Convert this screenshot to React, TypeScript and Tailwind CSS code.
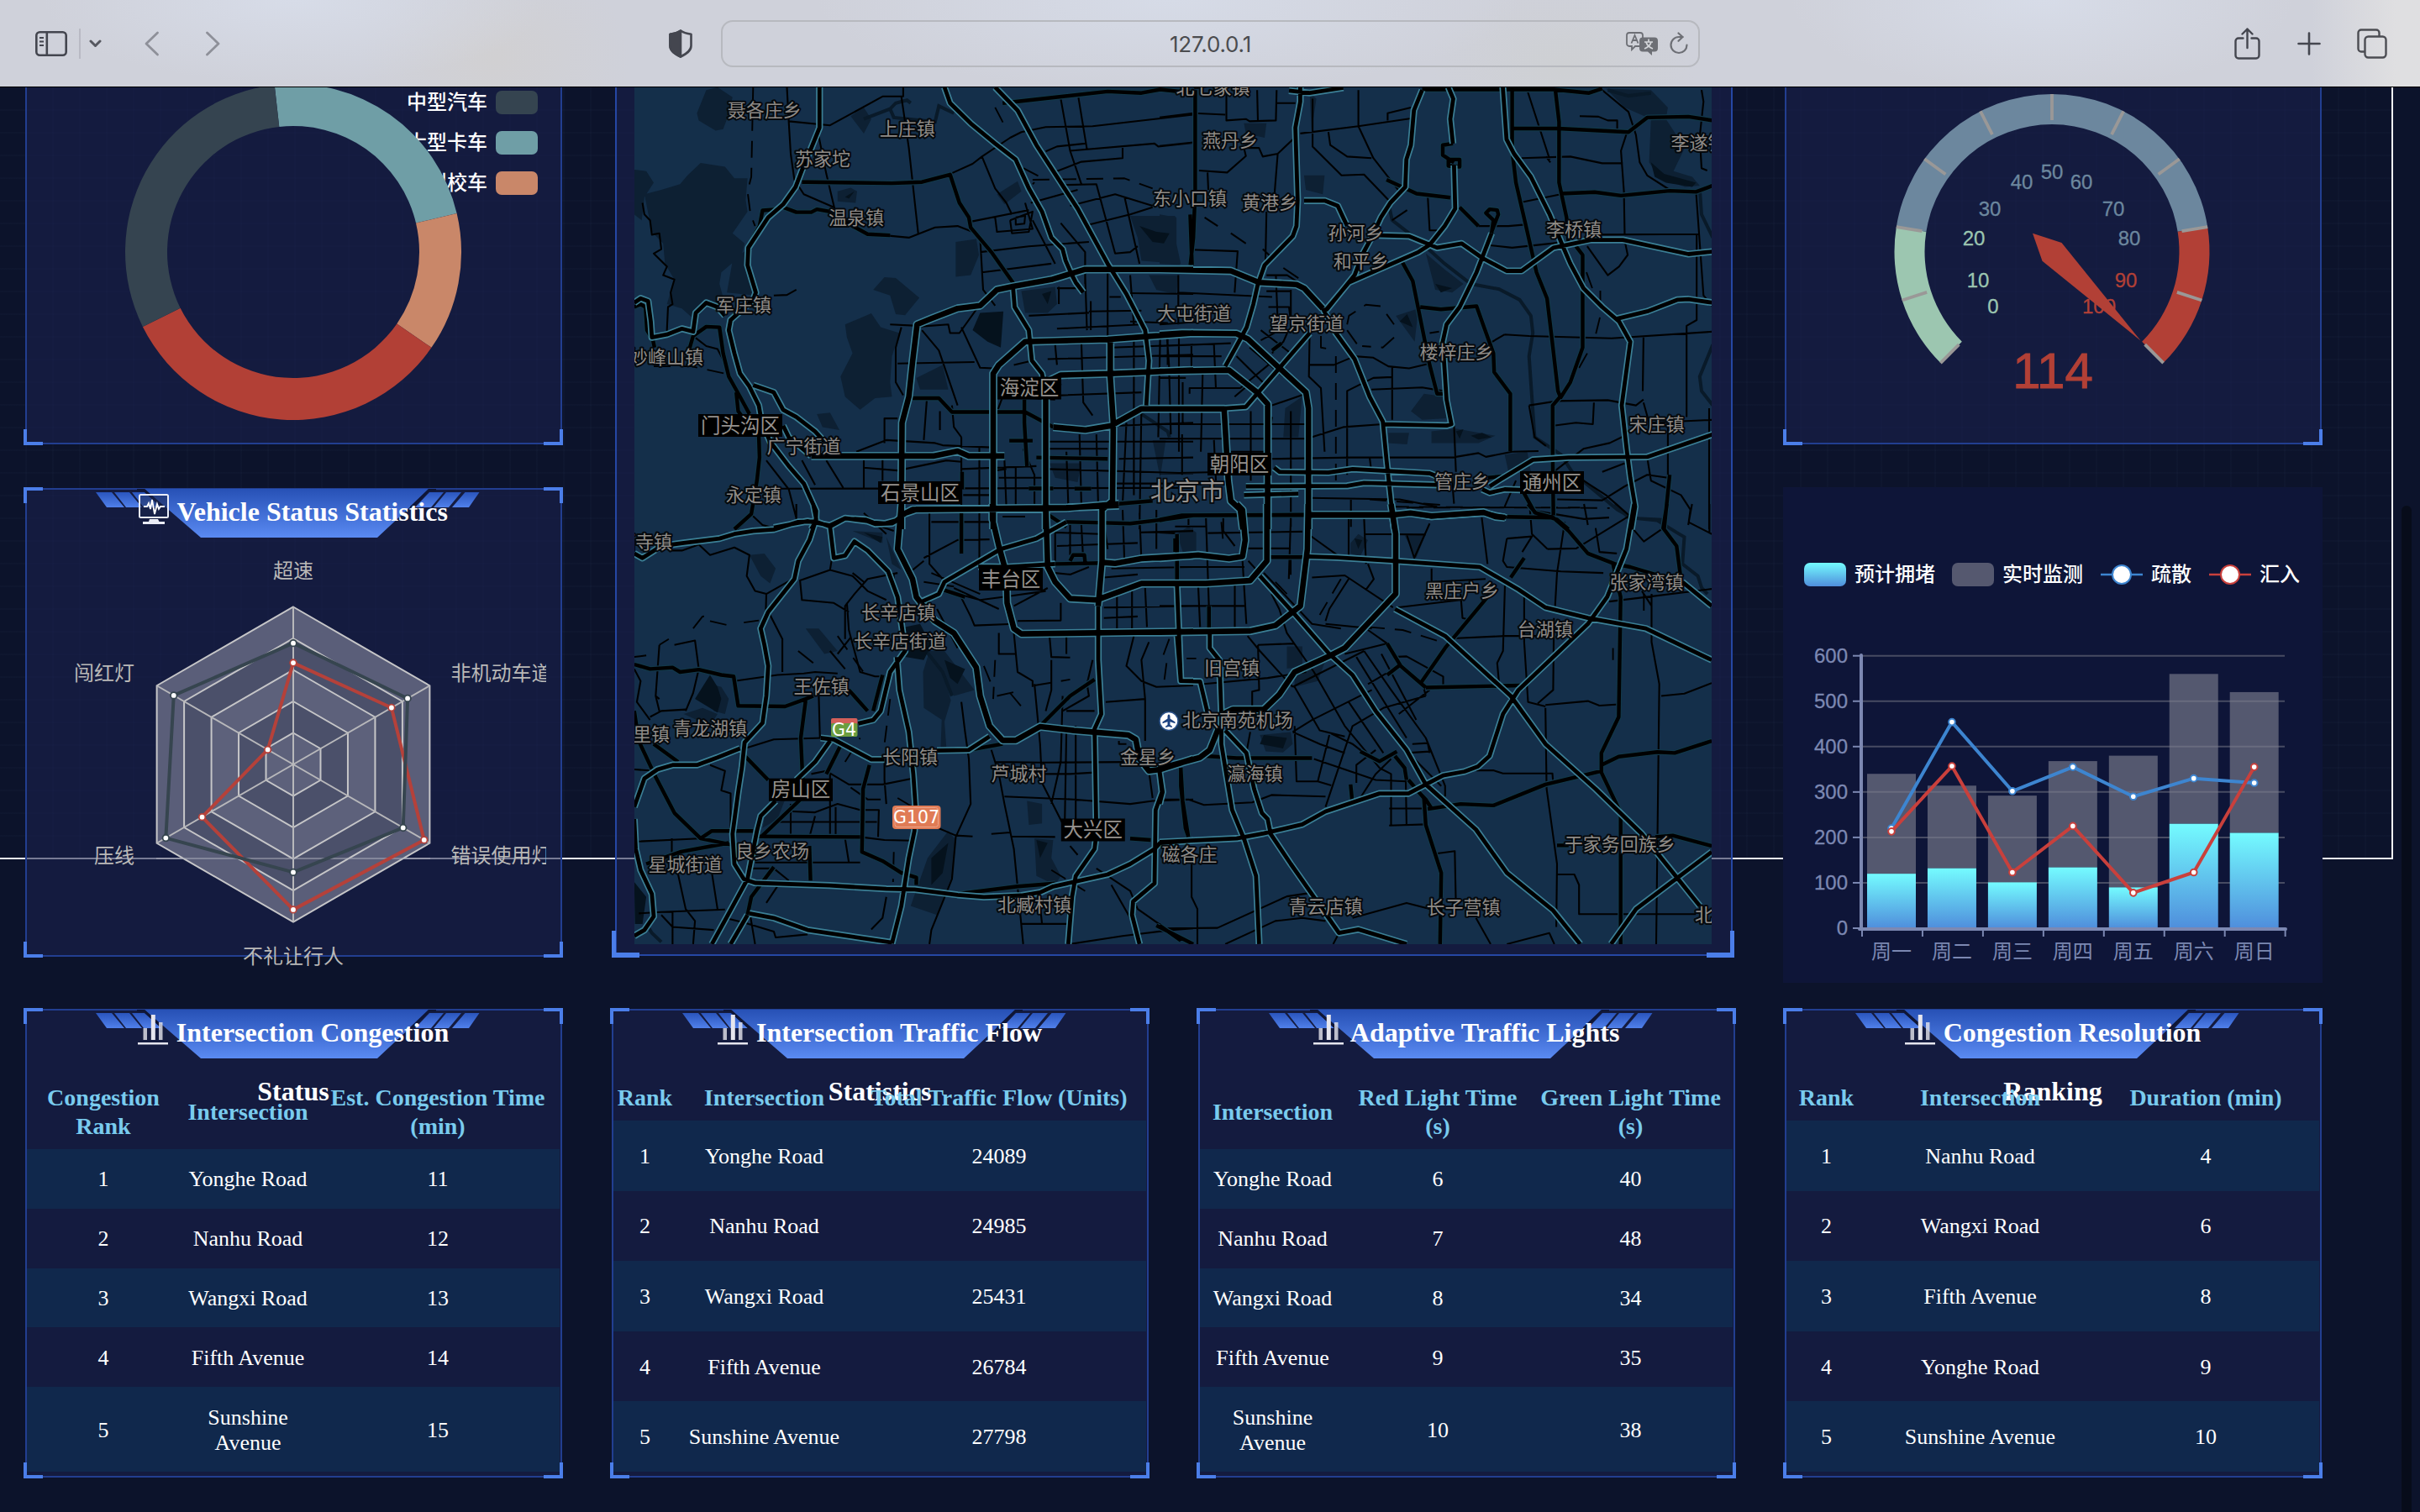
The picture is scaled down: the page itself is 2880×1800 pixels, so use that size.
import React from "react";

const CJK = "font-['Noto_Sans_CJK_SC',sans-serif]";

/* ------------------------------------------------------------------ */
/* Browser toolbar                                                     */
/* ------------------------------------------------------------------ */

function Toolbar() {
  return (
    <header className="relative z-10 flex h-[104px] shrink-0 items-center border-b border-black bg-[#cfd1da] bg-[radial-gradient(ellipse_300px_100px_at_350px_0,#d7dce8,transparent),radial-gradient(ellipse_420px_110px_at_1390px_0,#d6dbe7,transparent),radial-gradient(ellipse_300px_110px_at_2430px_0,#d7dce8,transparent),radial-gradient(ellipse_160px_120px_at_590px_70px,#d1d0d2,transparent),radial-gradient(ellipse_160px_100px_at_1860px_80px,#ced0d3,transparent),linear-gradient(90deg,transparent_95.5%,#dfdfe1_99%)]">
      <div className="flex w-[858px] items-center">
        <svg className="ml-[42px] h-[30px] w-[38px]" viewBox="0 0 38 30" fill="none" stroke="#44464f" strokeWidth="2.6">
          <rect x="1.3" y="1.3" width="35.4" height="27.4" rx="4" />
          <path d="M13.8 1.3v27.4" />
          <path d="M5 8h5M5 12.5h5M5 17h5" strokeWidth="2" />
        </svg>
        <div className="ml-[14px] h-9 w-[2px] bg-[#b9bac4]" />
        <svg className="ml-[10px] h-[10px] w-[15px]" viewBox="0 0 15 10" fill="none" stroke="#55575f" strokeWidth="3" strokeLinecap="round" strokeLinejoin="round">
          <path d="M2 2l5.5 5.5L13 2" />
        </svg>
        <svg className="ml-[51px] h-[30px] w-[18px]" viewBox="0 0 18 30" fill="none" stroke="#8e9099" strokeWidth="2.8" strokeLinecap="round" strokeLinejoin="round">
          <path d="M15.5 2L2 15l13.500 13" />
        </svg>
        <svg className="ml-[54px] h-[30px] w-[18px]" viewBox="0 0 18 30" fill="none" stroke="#8e9099" strokeWidth="2.8" strokeLinecap="round" strokeLinejoin="round">
          <path d="M2.500 2L16 15 2.500 28" />
        </svg>
        <svg className="ml-[534px] h-[34px] w-[28px]" viewBox="0 0 28 34" fill="none" stroke="#44464f" strokeWidth="2.600" strokeLinejoin="round">
          <path d="M14 1.500c3.500 2.500 7.500 3.500 12.500 4.200v13.800c0 6-5.500 9.500-12.500 13-7-3.500-12.500-7-12.500-13V5.700C6.500 5 10.500 4 14 1.500z" />
          <path d="M14 1.500v31c-7-3.500-12.500-7-12.500-13V5.700C6.500 5 10.500 4 14 1.500z" fill="#44464f" />
        </svg>
      </div>
      <div className="relative flex h-14 w-[1165px] items-center justify-center rounded-[14px] border-2 border-[#b7b9bf] font-['Inter',sans-serif] text-[26px] tracking-[-0.2px] text-[#4b4c4f]">
        <span className="relative top-px">127.0.0.1</span>
        <div className="absolute right-[12px] flex items-center gap-[14px]">
          <svg className="h-[28px] w-[38px]" viewBox="0 0 38 28">
            <path d="M4 1h13a3 3 0 013 3v10a3 3 0 01-3 3h-6l-4 4v-4H4a3 3 0 01-3-3V4a3 3 0 013-3z" fill="none" stroke="#6d6f75" strokeWidth="1.800" />
            <path d="M6.500 13.500L10.500 4l4 9.500M8 10h5" fill="none" stroke="#6d6f75" strokeWidth="1.800" />
            <path d="M20 6.500h14a4 4 0 014 4v9a4 4 0 01-4 4h-3v4.500l-5-4.500h-6a4 4 0 01-4-4v-9a4 4 0 014-4z" fill="#6d6f75" />
            <path d="M27 8.500v3M22 12h10M30 12c-1 4-4 6.500-8 8M24 12c1 4 4 6.500 8 8" fill="none" stroke="#d4d6da" strokeWidth="1.700" />
          </svg>
          <svg className="h-[28px] w-[22px]" viewBox="0 0 22 28" fill="none" stroke="#6d6f75" strokeWidth="2.200" strokeLinecap="round" strokeLinejoin="round">
            <path d="M20.500 15.500A9.500 9.500 0 1111 6h4.500" />
            <path d="M10.500 1.500L15.500 6l-5 4.800" />
          </svg>
        </div>
      </div>
      <svg className="ml-[636px] h-[38px] w-[31px]" viewBox="0 0 31 38" fill="none" stroke="#44464f" strokeWidth="2.400" strokeLinecap="round" strokeLinejoin="round">
        <path d="M10.500 12.500H5a3.500 3.500 0 00-3.500 3.500v17A3.500 3.500 0 005 36.500h21a3.500 3.500 0 003.500-3.500V16a3.500 3.500 0 00-3.500-3.500h-5.500" />
        <path d="M15.500 24V1.500M9.500 7.500l6-6 6 6" />
      </svg>
      <svg className="ml-[44px] h-[28px] w-[28px]" viewBox="0 0 28 28" fill="none" stroke="#44464f" strokeWidth="2.600" strokeLinecap="round">
        <path d="M14 1.500v25M1.500 14h25" />
      </svg>
      <svg className="ml-[43px] h-[36px] w-[36px]" viewBox="0 0 36 36" fill="none" stroke="#4c4d53" strokeWidth="2.400" strokeLinejoin="round">
        <path d="M9.500 27.500H5A3.500 3.500 0 011.500 24V5A3.500 3.500 0 015 1.500h18A3.500 3.500 0 0126.500 5v4" />
        <rect x="9.500" y="9.500" width="25" height="25" rx="4" />
      </svg>
    </header>
  );
}

/* ------------------------------------------------------------------ */
/* Panel frame and title banner                                        */
/* ------------------------------------------------------------------ */

function Panel({ className, children }: { className: string; children?: React.ReactNode }) {
  return (
    <section className={`relative w-[642px] shrink-0 ${className}`}>
      <div className="absolute inset-y-[1px] left-[2px] right-[1px] border-2 border-[#223e90] bg-[rgba(26,33,80,0.57)]" />
      <i className="absolute left-0 top-0 h-[19px] w-[23px] border-l-4 border-t-4 border-[#4b7ee9]" />
      <i className="absolute right-0 top-0 h-[19px] w-[23px] border-r-4 border-t-4 border-[#4b7ee9]" />
      <i className="absolute bottom-0 left-0 h-[19px] w-[23px] border-b-4 border-l-4 border-[#4b7ee9]" />
      <i className="absolute bottom-0 right-0 h-[19px] w-[23px] border-b-4 border-r-4 border-[#4b7ee9]" />
      <div className="relative h-full">{children}</div>
    </section>
  );
}

function MonitorIcon() {
  return (
    <svg className="mr-[2px] inline-block h-9 w-9 align-[-4px]" viewBox="0 0 36 36">
      <rect x="1" y="1" width="34" height="27" rx="1.500" fill="#1a2650" fillOpacity="0.55" stroke="#e8ecf8" strokeWidth="2" />
      <path d="M6 15h4l2-4 2 7 2-11 3 17 3-12 2 6 2-3h5" fill="none" stroke="#fff" strokeWidth="1.800" />
      <path d="M13 30h10l1.500 3H31v3H5v-3h7z" fill="#e9ebf5" />
    </svg>
  );
}

function BarsIcon() {
  return (
    <svg className="mr-[2px] inline-block h-9 w-9 align-[-4px]" viewBox="0 0 36 36" fill="#e6e6ee">
      <rect x="6.500" y="16" width="4.500" height="14" opacity="0.8" />
      <rect x="15.800" y="0" width="5" height="30" />
      <rect x="25" y="9" width="4.500" height="21" opacity="0.8" />
      <rect x="0" y="33" width="36" height="2.500" />
    </svg>
  );
}

function Title({ icon, text }: { icon: "monitor" | "bars"; text: string }) {
  return (
    <div className="absolute inset-x-0 top-0">
      <svg className="absolute left-[84px] top-[2px] h-[60px] w-[460px]" viewBox="112 582 460 60">
        <defs>
          <linearGradient id="banner" x1="0" y1="582" x2="0" y2="640" gradientUnits="userSpaceOnUse">
            <stop offset="0" stopColor="#2751b6" />
            <stop offset="1" stopColor="#5a8af2" />
          </linearGradient>
          <linearGradient id="bannerStripe" x1="0" y1="586" x2="0" y2="604" gradientUnits="userSpaceOnUse">
            <stop offset="0" stopColor="#2a55bd" />
            <stop offset="1" stopColor="#5080ea" />
          </linearGradient>
        </defs>
        <path d="M172 582H511L449 640H239Z" fill="url(#banner)" />
        <path d="M114 586h19l15 18h-21zM136 586h18l15 18h-19zM157 586h15l20 18h-21z" fill="url(#bannerStripe)" />
        <path d="M570.500 586h-17l-15.500 18h20zM549 586h-18l-15 18h18zM528 586h-17l-17 18h19z" fill="url(#bannerStripe)" />
        <path d="M163 583l8 0 23 21" fill="none" stroke="#0f1636" strokeWidth="3" />
        <path d="M519 583l-8 0-22 21" fill="none" stroke="#0f1636" strokeWidth="3" />
      </svg>
      <h2 className="relative mx-auto mt-[-6px] w-[420px] text-center text-[32px] font-bold leading-[70px] text-white">
        {icon === "monitor" ? <MonitorIcon /> : <BarsIcon />} {text}
      </h2>
    </div>
  );
}

/* ------------------------------------------------------------------ */
/* Donut                                                               */
/* ------------------------------------------------------------------ */

function arc(cx: number, cy: number, r0: number, r1: number, a0: number, a1: number) {
  const p = (r: number, a: number) => {
    const t = ((a - 90) * Math.PI) / 180;
    return `${(cx + r * Math.cos(t)).toFixed(2)} ${(cy + r * Math.sin(t)).toFixed(2)}`;
  };
  const large = a1 - a0 > 180 ? 1 : 0;
  return `M${p(r1, a0)}A${r1} ${r1} 0 ${large} 1 ${p(r1, a1)}L${p(r0, a1)}A${r0} ${r0} 0 ${large} 0 ${p(r0, a0)}Z`;
}

const DONUT = [
  { from: -6.4, to: 76.7, color: "#6f9ea6" },
  { from: 76.7, to: 124.7, color: "#c98769" },
  { from: 124.7, to: 243.6, color: "#b24036" },
  { from: 243.6, to: 353.6, color: "#354450" },
];

const DONUT_LEGEND = [
  { label: "中型汽车", color: "#354450", y: 122 },
  { label: "大型卡车", color: "#6f9ea6", y: 170 },
  { label: "大型校车", color: "#c98769", y: 218 },
];

function Donut() {
  return (
    <svg className="block h-[426px] w-[642px]" viewBox="28 104 642 426">
      {DONUT_LEGEND.map((l) => (
        <g key={l.y}>
          <rect x="590" y={l.y - 14} width="50" height="28" rx="7" fill={l.color} />
          <text x="580" y={l.y + 8} textAnchor="end" fontSize="24" fontWeight="500" fill="#fff" className={CJK}>{l.label}</text>
        </g>
      ))}
      {DONUT.map((d) => (
        <path key={d.from} d={arc(349, 300, 150, 200, d.from, d.to)} fill={d.color} />
      ))}
    </svg>
  );
}

/* ------------------------------------------------------------------ */
/* Radar                                                               */
/* ------------------------------------------------------------------ */

const RC = { x: 349, y: 910, r: 187.5 };
function radarPoint(i: number, f: number) {
  const t = ((i * 60 - 90) * Math.PI) / 180;
  return [RC.x + RC.r * f * Math.cos(t), RC.y + RC.r * f * Math.sin(t)];
}
const ring = (f: number) => [0, 1, 2, 3, 4, 5].map((i) => radarPoint(i, f).join(",")).join(" ");

const RADAR = [
  { color: "#b5413a", v: [0.645, 0.72, 0.959, 0.922, 0.668, 0.187] },
  { color: "#36454f", v: [0.77, 0.838, 0.805, 0.685, 0.934, 0.876] },
];

const RADAR_LABELS: [string, number, number, "start" | "middle" | "end"][] = [
  ["超速", 349, 680, "middle"],
  ["非机动车道", 536.5, 802, "start"],
  ["错误使用灯光", 536.5, 1019, "start"],
  ["不礼让行人", 349, 1139, "middle"],
  ["压线", 160, 1019, "end"],
  ["闯红灯", 160, 802, "end"],
];

function Radar() {
  return (
    <svg className="ml-[22px] block h-[590px] w-[600px]" viewBox="50 580 600 590">
      {[1, 0.8, 0.6, 0.4, 0.2].map((f, i) => (
        <polygon key={f} points={ring(f)} fill={i % 2 === 0 ? "#5d617b" : "#4b506a"} stroke="#c6c6c8" strokeWidth="2" fillOpacity={f === 1 ? 0.97 : 1} />
      ))}
      {[0, 1, 2, 3, 4, 5].map((i) => {
        const [x, y] = radarPoint(i, 1);
        return <line key={i} x1={RC.x} y1={RC.y} x2={x} y2={y} stroke="#b8b8bb" strokeWidth="2" />;
      })}
      <path d="M186 1022H512" stroke="#a9abb8" strokeWidth="1.500" opacity="0.7" />
      {RADAR.map((s) => {
        const pts = s.v.map((f, i) => radarPoint(i, f));
        return (
          <g key={s.color}>
            <polygon points={pts.map((p) => p.join(",")).join(" ")} fill="none" stroke={s.color} strokeWidth="4" strokeLinejoin="bevel" />
            {pts.map((p, i) => (
              <circle key={i} cx={p[0]} cy={p[1]} r="3.800" fill="#fff" stroke={s.color} strokeWidth="1.800" />
            ))}
          </g>
        );
      })}
      {RADAR_LABELS.map(([t, x, y, a]) => (
        <text key={t} x={x} y={y + 8} textAnchor={a} fontSize="24" fill="#b9b8b7" className={CJK}>{t}</text>
      ))}
    </svg>
  );
}

/* ------------------------------------------------------------------ */
/* Gauge                                                               */
/* ------------------------------------------------------------------ */

const GAUGE_LABELS: [string, number, number, string][] = [
  ["0", 2372, 365, "#9cc6b0"], ["10", 2354, 334, "#9cc6b0"], ["20", 2349, 284, "#9cc6b0"],
  ["30", 2368, 249, "#6c879e"], ["40", 2406, 217, "#6c879e"], ["50", 2442, 205, "#6c879e"],
  ["60", 2477, 217, "#6c879e"], ["70", 2515, 249, "#6c879e"], ["80", 2534, 284, "#6c879e"],
  ["90", 2530, 334, "#b24036"], ["100", 2498, 365, "#b24036"],
];

function Gauge() {
  return (
    <svg className="block h-[426px] w-[642px] font-['Liberation_Sans',sans-serif]" viewBox="2122 104 642 426">
      <path d={arc(2442, 299.500, 151.500, 187.500, -135, -81)} fill="#9cc6b0" />
      <path d={arc(2442, 299.500, 151.500, 187.500, -81, 81)} fill="#6c879e" />
      <path d={arc(2442, 299.500, 151.500, 187.500, 81, 135)} fill="#b24036" />
      {Array.from({ length: 11 }, (_, i) => (
        <line key={i} x1="2442" y1="112" x2="2442" y2="143" stroke="#9a9897" strokeWidth="3.800" transform={`rotate(${-135 + i * 27} 2442 299.5)`} />
      ))}
      {GAUGE_LABELS.map(([t, x, y, c]) => (
        <text key={t} x={x} y={y + 8} textAnchor="middle" fontSize="24" fill={c} stroke={c} strokeWidth="0.300">{t}</text>
      ))}
      <path d="M2419 277.800L2453.500 289L2547.500 405.500L2430.500 310.700Z" fill="#b24036" />
      <text x="2443" y="461.500" textAnchor="middle" fontSize="60" fill="#b24036" stroke="#b24036" strokeWidth="1">114</text>
    </svg>
  );
}

/* ------------------------------------------------------------------ */
/* Weekly bar and line chart                                           */
/* ------------------------------------------------------------------ */

const DAYS = ["周一", "周二", "周三", "周四", "周五", "周六", "周日"];
const EXPECTED = [120, 132, 101, 134, 90, 230, 210];
const TOTAL = [340, 314, 292, 368, 380, 560, 520];
const OUTFLOW = [220, 454, 302, 355, 290, 330, 320];
const INFLOW = [213, 357, 123, 225, 78, 123, 355];
const vy = (v: number) => 1105 - v * 0.5405;
const vx = (i: number) => 2251 + i * 71.95;

function WeekChart() {
  const series = [
    { color: "#3d85d0", v: OUTFLOW },
    { color: "#c9403c", v: INFLOW },
  ];
  return (
    <section className="h-[590px] w-[642px] bg-[#0e1538]">
      <svg className="block h-full w-full" viewBox="2122 580 642 590">
        <defs>
          <linearGradient id="bar" x1="0" y1="0" x2="0" y2="1">
            <stop offset="0" stopColor="#74fbff" />
            <stop offset="1" stopColor="#4f8edc" />
          </linearGradient>
        </defs>
        <rect x="2147" y="670" width="50" height="28" rx="7" fill="url(#bar)" />
        <rect x="2323" y="670" width="50" height="28" rx="7" fill="#55586f" />
        <path d="M2500 684h50" stroke="#3d85d0" strokeWidth="2.500" />
        <circle cx="2525" cy="684" r="11" fill="#fff" stroke="#3d85d0" strokeWidth="2" />
        <path d="M2629 684h50" stroke="#c9403c" strokeWidth="2.500" />
        <circle cx="2654" cy="684" r="11" fill="#fff" stroke="#c9403c" strokeWidth="2" />
        <g fontSize="24" fontWeight="500" fill="#fff" className={CJK}>
          <text x="2207" y="691.500">预计拥堵</text>
          <text x="2383" y="691.500">实时监测</text>
          <text x="2560" y="691.500">疏散</text>
          <text x="2689" y="691.500">汇入</text>
        </g>
        {[100, 200, 300, 400, 500, 600].map((v) => (
          <line key={v} x1="2215" x2="2719" y1={vy(v)} y2={vy(v)} stroke="#474b62" strokeWidth="2" />
        ))}
        {DAYS.map((d, i) => (
          <g key={d}>
            <rect x={vx(i) - 29} width="58" y={vy(TOTAL[i])} height={vy(EXPECTED[i]) - vy(TOTAL[i])} fill="#7b7c8d" fillOpacity="0.65" />
            <rect x={vx(i) - 29} width="58" y={vy(EXPECTED[i])} height={1105 - vy(EXPECTED[i])} fill="url(#bar)" />
            <text x={vx(i)} y="1141" textAnchor="middle" fontSize="24" fill="#7c88b2" className={CJK}>{d}</text>
          </g>
        ))}
        {[0, 100, 200, 300, 400, 500, 600].map((v) => (
          <g key={v}>
            <line x1="2205" x2="2215" y1={vy(v)} y2={vy(v)} stroke="#7c88b2" strokeWidth="2" />
            <text x="2199" y={vy(v) + 8} textAnchor="end" fontSize="24" fill="#7c88b2" stroke="#7c88b2" strokeWidth="0.300" className="font-['Liberation_Sans',sans-serif]">{v}</text>
          </g>
        ))}
        {Array.from({ length: 8 }, (_, i) => (
          <line key={i} x1={2216 + i * 71.95} x2={2216 + i * 71.95} y1="1106" y2="1115" stroke="#7c88b2" strokeWidth="2" />
        ))}
        <path d="M2215 780V1106M2213 1106H2720" stroke="#7c88b2" strokeWidth="4" strokeLinecap="round" />
        {series.map((s) => (
          <g key={s.color}>
            <polyline points={s.v.map((v, i) => `${vx(i)},${vy(v)}`).join(" ")} fill="none" stroke={s.color} strokeWidth="4" strokeLinejoin="bevel" />
            {s.v.map((v, i) => (
              <circle key={i} cx={vx(i)} cy={vy(v)} r="3.800" fill="#fff" stroke={s.color} strokeWidth="2" />
            ))}
          </g>
        ))}
      </svg>
    </section>
  );
}

/* ------------------------------------------------------------------ */
/* City map. Each tile has local coordinates that are scaled to page   */
/* units; every line is "x,y x,y ..." and lines are parted by "|".     */
/* ------------------------------------------------------------------ */

type Tile = {
  o: [number, number];
  s: [number, number];
  ringRoads: string;
  highways: string;
  streets: string;
  lanes: string;
  dashes: string;
  parks: string;
  lakes: string;
  rivers: string;
};

const TILES: Tile[] = [
  {
    o: [720, 90],
    s: [0.4464, 0.3444],
    ringRoads:
      "790,1568 790,1500 792,1200 810,1110 820,990 832,860 870,840 940,805 1000,795 1045,740 1090,728 1190,705 1280,670 1568,670|1035,1568 1035,1030 1050,1000 1120,920 1340,912 1568,890|1175,1060 1215,1035 1350,1030 1568,1018|1195,1215 1280,1225 1350,1210 1430,1152 1568,1152|790,1520 820,1500 1230,1495 1370,1480|550,1315 875,1315 940,1298 970,1315 1065,1315|1175,1100 1175,1568|1347,920 1347,1040 1355,1200 1353,1470 1325,1500 1325,1568",
    highways:
      "572,40 572,180 550,250 530,310 508,385 475,445 435,490 382,595 380,655 402,750 395,775 335,845 330,880 345,960 360,1030 385,1075 410,1140 418,1200 440,1265 490,1350 530,1410 563,1505 562,1540 550,1568|905,40 920,95 975,165 1040,235 1095,290 1130,390 1165,470 1190,560 1220,600 1228,640 1245,690 1255,715 1275,750|1040,40 1100,120 1150,240 1200,340 1260,460 1340,650 1390,755 1440,880 1450,985 1443,1140|78,785 95,770 115,780 122,850 125,905 165,895 205,875 235,885 242,820 270,785 300,800 320,830|395,1070 450,1095 475,1155 510,1180 560,1230 585,1265|475,1210 490,1250 550,1315|1088,735 1092,800 1130,880 1138,985 1165,1030 1175,1100|450,1562 540,1540 600,1555 640,1530 700,1540 720,1550 765,1548 790,1530",
    streets:
      "78,800 95,790 108,800 112,880 128,915 132,940|225,945 235,900 270,868 305,870 315,960 330,1040 360,1110 385,1170|820,1115 890,1115 925,1163 1120,1163 1195,1215|1370,1480 1460,1470|525,368 540,368 765,372 845,368 920,342 945,440 970,490 975,525 1030,610 1090,720|475,455 510,472 550,472 565,462 600,470 660,520 700,548 760,552|460,462 420,466 412,520 395,560|1060,95 1340,55 1430,60 1480,48 1568,60|410,1240 412,1320 405,1400 390,1515 345,1568|1118,1120 1118,1200 1125,1350|1150,1320 1340,1325|1078,1262 1140,1262|350,1095 355,1160 395,1230|1560,480 1565,655|1130,1427 1195,1427|1252,1428 1296,1428|1150,1490 1230,1560|952,1370 952,1430",
    lanes:
      "485,40 490,160 495,270 505,360 530,410 610,455|490,158 600,172 740,72 795,72 795,40|570,210 590,340 612,460|790,72 810,250 835,545|745,552 810,560 880,525 940,520 990,545|920,340 980,305 1005,280 1080,215 1110,195 1175,178 1300,175 1568,135|1005,280 1040,390 1070,440 1085,480|1215,80 1240,260 1270,375|1262,75 1285,255|1175,262 1205,245 1280,235|1240,260 1465,235 1475,245 1568,232|1205,330 1270,298 1380,285 1380,250|975,505 1130,465|1135,440 1260,395|1000,610 1130,590 1290,575|1005,680 1190,650|1000,560 1008,740 1040,795|1040,490 1045,540 1140,530 1120,440|1215,510 1280,610 1280,720|1240,450 1360,410 1460,450|1290,515 1400,480 1460,455|1225,378 1310,375 1360,615 1400,610 1420,590|1385,420 1425,650|1205,875 1430,860|1130,830 1290,820|1295,780 1295,880|1345,765 1375,765|1280,690 1285,880|1340,680 1340,900|780,995 985,990|790,870 775,940 775,1060 795,1105|845,880 890,950 940,1140|925,1140 930,1215 950,1250|760,860 835,865|950,870 1000,1010 1035,1012|835,868 915,860 920,890 945,890 1000,790|858,1120 850,1260|690,1330 690,1425|670,1300 750,1260 880,1270 900,1278 1030,1285|470,1428 1568,1425|950,1250 950,1500|950,1360 1150,1350|998,1285 998,1500|1050,1390 1180,1390|1115,1290 1145,1380 1145,1480|740,1320 740,1400|690,1355 780,1365 910,1330 950,1335|745,1270 745,1185 780,1185|525,1330 560,1415|590,1330 635,1425|430,1330 490,1430 510,1530|1215,1105 1430,1095|1180,980 1568,965|1350,940 1568,930|1370,1210 1568,1200|1180,1265 1568,1265|1180,1290 1340,1290|1370,1325 1568,1320|1180,1360 1568,1375|1360,1410 1568,1410|1200,930 1205,1000|1270,920 1275,1130 1300,1175|1400,690 1410,860|1480,900 1475,1250|1500,900 1500,1000|1410,900 1410,1450|1430,1150 1425,1568|1390,1200 1380,1480|1530,890 1530,1300|1310,1240 1315,1490|1265,1240 1270,1480|1230,1300 1235,1480|100,440 105,480 120,500 125,550 145,545 150,600 130,615 165,660 155,690 185,705 175,750 180,790 168,800 165,880 175,890|450,760 485,758 510,740|1140,500 1200,650|1080,500 1140,470 1130,540 1085,545 1080,500|1090,1000 1140,985|1060,1110 1200,1120|1040,1180 1060,1110|240,905 270,935 300,945 330,1020|955,1450 1030,1450|1290,815 1430,812|1400,752 1568,755|1540,1060 1540,1200|1095,490 1120,485 1118,512 1095,515 1095,490|1095,1350 1095,1490|1065,1330 1070,1490|893,1160 893,1225|1205,735 1275,735|1400,850 1500,855|1210,1040 1215,1070|1070,1360 1040,1365|1210,730 1210,790",
    dashes: "395,40 390,350 380,400 388,480 400,520|1140,360 1385,355 1460,390|130,1005 230,1005 320,1030|1115,320 1160,350 1140,375|1040,110 1062,165",
    parks:
      "245,130 270,50 300,40 340,75 325,150 315,185 295,190 250,155|220,345 255,302 320,315 345,355 380,355 375,430 380,470 340,545 372,580 365,620 310,680 305,720 320,790 250,800 235,840 205,805 165,790 185,705 160,650 155,580 125,540 105,410 150,395 200,375|78,325 110,330 130,370 105,420 98,500 78,480|715,740 745,697 775,700 838,768 800,828 775,825 760,760|640,860 710,822 735,870 785,890 765,970 760,1060 765,1110 720,1115 680,1155 640,1110 628,1040 660,960 645,905|935,575 990,565 997,620 975,690 935,695|565,1170 600,1165 625,1225 580,1215|620,400 655,388 672,400 668,440 620,435|1400,485 1520,485 1520,560 1535,650 1430,640 1420,560|1110,745 1200,730 1205,790 1180,820 1120,820|830,1045 900,1000 915,1085 840,1085|655,140 690,110 710,150 690,200|1185,1340 1270,1340 1260,1405 1200,1390|1450,690 1530,690 1520,755 1470,740|1460,1260 1495,1260 1480,1390|340,640 380,600 385,700 400,760 325,750|1045,410 1100,365 1110,400 1065,445",
    lakes: "1000,820 1062,815 1055,940 1020,920 980,880|1425,520 1470,540 1505,545 1490,580 1460,575|640,420 665,400 650,425|1165,755 1190,745 1180,790",
    rivers: "690,150 760,115 770,145 880,160 890,105 930,130|760,115 775,95 805,85 815,95|1430,1170 1500,1230 1505,1250",
  },
  {
    o: [1380, 90],
    s: [0.4464, 0.3444],
    ringRoads:
      "0,670 190,675 265,715 365,722 385,735 435,805|0,895 60,890 205,892 235,910 310,1000 390,1095 397,1150 397,1568|0,1022 185,1018 260,1095 288,1135 288,1568|0,1152 172,1152 183,1400 190,1470 215,1500 222,1568|397,1518 625,1518",
    highways:
      "375,40 375,90 362,180 368,430 365,520 355,555 280,655 262,720 250,790 232,870 205,935 175,1005|700,50 678,120 670,240 658,290 655,385 615,440 590,490 565,560 540,620 520,690 445,810|770,40 783,80 775,150 782,235|785,310 788,460 760,520 720,585 690,610 505,715 440,815|585,552 665,555 740,595 805,580 860,630 925,675 965,675 1050,595 1150,568 1235,568 1410,617 1475,608|385,432 440,432 475,450 500,520|915,40 925,220 945,270 990,350 1040,480 1075,590 1095,650 1130,735 1180,800 1225,850 1255,920 1232,1140 1245,1290 1255,1390 1268,1490 1258,1568|885,545 845,680 800,800 765,860 755,920 765,1120 778,1205 765,1210 595,1205|1220,840 1300,815 1380,775 1410,773 1475,785|435,805 470,890 520,980 560,1110 595,1195 605,1330 625,1568|175,1150 230,1145 260,1100 400,890|230,1420 500,1418 545,1408 750,1415|225,1450 370,1445|305,1355 320,1370 450,1372 515,1360 720,1375 740,1385|860,1430 880,1442 920,1430 965,1432|880,1420 910,1395 995,1328 1090,1320 1300,1318 1475,1240|625,1518 670,1512 725,1525 865,1512 925,1528|345,52 400,60 490,42",
    streets:
      "782,235 755,240 755,275 785,300|770,290 800,290 800,315 770,312 770,290|875,1390 920,1385|925,1525 1050,1528|970,1440 1000,1510 1060,1535 1090,1568|95,50 95,400 90,560 82,655|940,40 940,260 950,370 975,510 1005,680 1033,770 1045,900 1062,1090 1068,1110 1048,1140 1048,1310 1050,1520|1055,50 1065,160 1065,370 1085,490 1090,580|1110,590 1128,620 1128,940 1095,1060 1068,1115|943,183 1062,183 1250,195 1300,145 1410,142 1475,155|1070,408 1160,403 1230,415 1360,398 1430,402 1475,380|605,360 685,408 775,422|800,455 850,520|700,48 1050,48 1145,60 1180,45|885,545 890,500 870,475 880,462 900,465 903,480 885,540|645,640 675,710 720,1000 740,1100 755,1100|695,800 750,808 845,797 865,870 890,960 892,1025 935,1100 935,1298|1360,1380 1345,1568|0,1535 60,1520 390,1518|230,1418 330,1418|300,950 325,925",
    lanes:
      "0,145 90,130 175,135|178,50 178,155 230,150 240,158 310,155 312,50|260,50 262,155|312,95 362,95|0,243 95,230|105,328 180,335 230,278 225,250 265,250 275,280 315,270 360,215|315,270 305,430|285,470 282,655|128,335 130,395|375,200 530,175 670,148|530,50 530,175 570,285 645,410|450,195 455,240 500,280 565,285|408,80 408,245 485,345 545,342 610,430|608,155 608,130 670,110|85,602 208,607 200,750|965,285 1095,280 1180,303 1235,303|1120,140 1170,142 1195,155 1220,155 1220,185|1180,50 1250,125 1270,205 1280,300 1300,345 1360,395|1245,200 1230,260 1238,400 1240,550|1150,550 1440,548|1430,400 1450,760 1475,800|870,585 940,595 1060,578|850,520 930,520 975,515|965,438 1070,410|1445,50 1450,90 1440,210 1445,320 1460,328|920,895 985,900 1205,908 1475,885|880,925 920,895|1290,905 1288,1090|1432,550 1432,845 1405,865 1405,1180|985,1140 1060,1125 1195,1122 1270,1140 1290,1120|985,1140 1000,1250 1030,1280|1050,1210 1110,1200 1155,1205 1158,1130|400,1000 465,1000 520,970 570,975 610,1005 665,1012 720,995|620,1010 620,1190|500,1380 500,1090 570,1045 620,1042|565,1085 700,1078 755,1090|405,1250 490,1215 595,1205|300,1325 510,1320 780,1320 850,1305 870,1318 940,1300 1010,1298|785,1210 790,1370|0,1205 170,1205 390,1205|0,1255 405,1255|0,935 190,925|0,970 165,970|80,1100 80,1080 215,1080 290,1000|205,970 275,1060|240,940 330,1040|400,890 398,1040 430,1080 440,1300|85,930 85,1010|115,1030 110,1300|145,930 150,1080|243,1160 243,1400|350,1160 350,1560|20,910 25,1000 30,1240|300,1140 390,1100|285,690 340,690 400,740|310,690 315,850|350,740 350,890|285,745 350,745|290,800 345,800 350,850|50,690 50,860|50,750 300,765|0,860 120,850|270,880 350,960|300,960 330,920 340,890|1130,1400 1190,1450 1260,1530|1060,1465 1180,1468 1240,1420 1300,1380 1355,1390|1040,1380 1130,1290 1200,1270 1240,1245|1140,590 1195,690 1225,660 1248,620 1240,570|1300,1320 1310,1400 1390,1450 1415,1500 1410,1550|1355,1200 1355,1390|1465,1150 1465,1568|1290,1130 1305,1200 1475,1190|400,1460 640,1465 740,1490|510,1460 510,1560|780,1400 785,1480|920,1490 950,1400|715,420 720,535 740,535|190,545 230,580|120,490 155,520|60,1240 60,1380|275,600 300,630|330,665 370,700|620,500 660,465|1030,280 1042,300|980,50 1040,290|0,1375 180,1370|145,1260 150,1400|560,1320 565,1370|1180,1370 1240,1340|720,890 745,885|190,1300 280,1300|300,1180 290,1250|270,915 320,880|310,1010 360,950|245,1060 200,1110|0,1045 70,1045",
    dashes: "500,860 505,830 550,792 590,797 625,860|500,880 530,935|625,905 595,940 540,935|470,970 470,1400|1138,680 1155,740 1175,740 1175,830 1160,910|620,1490 1200,1495|560,1465 760,1485|430,900 430,940 470,950|1140,960 1110,1030",
    parks:
      "385,345 440,345 435,410 390,395|0,480 45,490 45,620 55,655 0,650|0,690 50,690 45,755 0,740|710,615 760,670 810,720 780,750 735,740|630,830 690,805 680,920|705,1100 760,1110 765,1185 700,1190 670,1160|610,1235 665,1235 660,1275 610,1270|725,1230 790,1220 895,1245 850,1270 725,1270|335,1150 380,1110 370,1250 330,1250|225,165 285,165 280,215 230,200|920,1310 980,1300 990,1370 930,1370|1190,45 1240,110 1310,150 1305,300 1330,350 1400,385 1440,380 1420,350 1370,330 1400,250 1350,150 1355,110 1310,50|400,60 418,80 405,190",
    lakes: "735,720 780,735 750,750|640,850 660,825 675,870|790,1230 810,1222 800,1255|830,1245 860,1235 885,1250 850,1258|1310,300 1345,340 1430,370 1420,385 1350,370 1320,350",
    rivers: "610,440 620,500 700,580 760,650 830,720 905,738 960,775 990,830 995,890 985,970 1000,1250 1070,1310 1100,1370 1220,1500 1260,1530 1340,1535|1440,390 1445,480 1475,560|1475,930 1440,1040 1445,1090 1475,1140|1195,50 1250,70 1310,60",
  },
  {
    o: [720, 600],
    s: [0.4464, 0.3571],
    ringRoads:
      "790,0 780,150 820,250 830,310 880,390 930,430 990,545 1000,640 1025,740 1060,788 1095,788 1160,742 1250,755 1395,770 1415,785 1425,850 1450,890 1480,885 1568,850|1033,0 1033,50 1050,140 1070,230 1072,330 1090,415 1110,433 1568,425|1175,0 1180,210 1200,260 1240,315 1310,320 1430,265 1568,265|790,35 830,18 1230,12 1370,5|1325,15 1325,190 1315,340|1330,195 1360,198 1430,182 1568,172",
    highways:
      "78,165 100,180 150,140 210,130 305,115 345,100 395,90 450,85 515,60 560,58 600,75 640,48 695,52 715,62 745,65 775,55 790,40|555,0 563,50 545,120 515,190 505,250 435,360 415,415 425,470 435,540 430,640 420,730 372,795 365,880 355,960 340,1100 345,1200 370,1250 400,1263 600,1272 750,1283 825,1285 940,1303 1010,1310 1110,1305 1160,1295 1195,1275 1250,1260 1340,1235 1400,1200 1465,1150 1480,1130 1568,1122|1315,340 1315,520 1323,700 1305,750 1310,1100 1305,1150 1255,1240 1245,1310 1235,1467|845,325 890,300 905,260 1055,150 1150,115 1230,60|995,208 1070,210 1200,200|600,75 610,180 640,172 665,125 700,155 755,225 780,310 795,440 800,490 760,560 735,690 715,720 675,732|575,780 610,785 710,852 745,852|885,822 970,820 1025,775|778,510 785,620 810,760 822,900 828,1010 825,1090 810,1180 800,1260 790,1340 765,1465|600,790 560,860 510,920|455,990 415,1040 405,1090 380,1250 330,1365 285,1467|78,1010 105,915 140,885 180,870 245,870 300,845 360,815|78,1050 82,1150 95,1220 125,1300 130,1375 105,1420 78,1440|335,1467 380,1370|385,1365 450,1380 540,1420 765,1462|1478,890 1485,960 1468,1020 1465,1265 1408,1325 1405,1370 1425,1467|1525,440 1535,590 1568,590",
    streets:
      "1230,60 1310,62 1400,65 1500,50 1568,38|1200,200 1325,197|1240,190 1248,170 1278,170 1280,195|970,820 1060,800|380,1370 390,1310 450,1210|78,535 120,550 180,545 200,560 250,552 310,570 343,575 355,673 480,675 535,650 555,640|535,655 522,780 527,920|650,620 700,690|740,570 715,690|78,690 90,790 135,910 185,1030 255,1115 335,1135|130,800 195,860|365,830 435,920|630,800 590,900|525,980 420,1105|255,1115 285,1090 395,1090|410,1108 680,1110|705,870 688,950 685,1160 740,1190 790,1230 830,1245 830,1270|940,1300 1100,1275 1200,1265|1305,585 1240,640 1160,740|1525,120 1525,440|950,25 950,165|1535,880 1540,990 1555,1110|545,1140 548,1255|110,1200 200,1160 330,1130|1400,1115 1455,1120|1520,115 1520,160|900,285 960,310|1470,1405 1568,1467",
    lanes:
      "395,0 395,30 345,95|390,35 420,70 450,80|510,0 510,60|170,155 205,155 250,135 280,170 345,145 385,170 378,240 400,290 430,300 428,380|430,300 500,250|440,370 473,450 473,560|600,220 520,255 525,320 610,330 650,360|605,180 600,220 660,240 700,290 750,320|640,450 640,340 665,300 700,250 780,230|645,330 650,420 680,560 720,575 735,575|145,650 135,640 145,470|135,640 145,690|185,470 240,455 250,550 235,630 215,690|78,550 95,590 85,660 120,720|120,710 150,690 215,685|345,590 460,570 530,565 560,560 620,565|360,820 450,785 580,780|570,640 573,780|78,885 140,890|280,870 320,890 310,955 335,965 335,1130|550,900 590,890 650,935 740,935 820,915|600,900 600,1100|495,1000 495,1110|500,1025 560,1028 620,1000 680,1020 730,1020 728,1110|450,1060 725,1060|615,1010 615,1110|560,1040 545,1110|655,945 700,985 735,985|745,850 745,920|745,920 750,1000|400,1195 680,1195|640,1115 650,1195|680,1110 745,1120 820,1122|395,1215 450,1215 490,1255|90,1125 250,1115|178,1115 178,1170|195,1235 215,1350 240,1390 235,1467|285,1230 300,1350|90,1365 150,1360 320,1352|150,1370 180,1410 290,1420|180,1360 180,1467|385,1355 400,1467|320,1380 370,1395 450,1425 455,1445 540,1435|470,1255 430,1330|750,1310 740,1380 710,1418|870,60 1035,60|865,30 865,200 900,250|850,180 940,120 1025,118|998,30 998,210|945,300 975,375 985,405 1090,400|910,290 1000,320 1060,310 1175,290|1100,390 1215,388 1215,330|1090,430 1100,560 1140,590 1140,610|1050,430 1050,500 1095,500|1185,440 1190,510 1240,512|1300,520 1285,600 1290,640 1220,690|1190,520 1190,620 1175,690|1335,660 1440,650 1440,790|1410,440 1390,540 1430,590 1470,610 1568,605|1450,460 1430,520 1440,650|1220,640 1215,860 1190,1000|1255,740 1255,1110|1230,760 1225,1120|1040,860 1160,862 1400,860|1065,975 1250,985 1400,1000 1460,990 1568,985|1160,900 1240,900 1305,895|1030,820 1050,900 1065,1000 1090,1150 1115,1467|950,660 960,760 970,850 975,1000 935,1110 925,1250 870,1420 865,1467|1145,600 1160,800 1165,930 1230,1090|850,1060 935,1105 980,1108|1030,1100 1080,1095|1085,1108 1200,1110|1310,1215 1400,1290 1420,1350 1500,1420 1568,1467|1110,1400 1235,1400|1240,1467 1380,1440 1510,1420 1568,1415|1160,1340 1165,1400|1305,690 1230,690|1200,75 1200,190|1240,60 1240,170|1270,70 1275,190|1380,20 1385,200|1425,30 1430,190|1200,95 1320,100|1205,140 1420,130|1330,345 1568,340|1330,380 1420,375|1365,280 1365,415|1405,280 1405,415|1440,280 1445,410|1350,215 1568,210|1470,20 1470,150|1200,230 1240,235 1290,210|1330,245 1420,235|870,230 1000,300|930,280 1050,350|515,490 555,530|600,490 640,550|655,445 620,500|690,30 750,100|700,60 770,90|820,220 850,190|850,260 930,275|1090,340 1180,280|1230,430 1230,500|1350,1270 1400,1380|1060,42 1120,42|1330,60 1340,150|1425,95 1568,90|660,230 690,260|885,350 940,480|1450,890 1460,980|1370,790 1370,800 1390,800|1170,860 1165,900|1240,1140 1260,1170",
    dashes: "235,415 260,375 290,372|370,395 410,388|145,470 170,450|280,390 330,405|760,650 745,800|1040,520 1035,650|1045,640 1115,620|1145,605 1240,585|1080,630 1120,690|620,440 700,580|1010,540 1030,600|640,860 680,780|770,1160 768,1260|780,980 820,1010|1190,1220 1280,1290|78,510 110,505|770,230 770,300 800,440",
    parks:
      "385,170 425,165 455,215 440,265 415,240|535,415 570,415 620,490 585,500|860,490 905,490 985,620 930,640|848,560 865,490 905,580 922,655 905,725 850,680|900,640 910,810 895,810|915,1090 935,1120 925,1240 885,1370 815,1340 860,1180|1125,990 1165,1000 1165,1065 1130,1070|1145,1115 1195,1120 1190,1180 1215,1240 1200,1270 1150,1240|660,90 740,95 740,130|750,110 790,220 765,200|210,700 260,680 300,700 280,740|430,1010 480,985 460,1050 420,1080|280,600 310,610 330,650 320,700 290,690|1530,90 1568,80 1568,150 1540,140",
    lakes: "240,650 280,570 300,610 310,650 300,695|800,410 840,400 870,470 850,520 800,510|78,1260 110,1310 100,1400 80,1400|905,520 960,550 940,600 920,580|870,1180 915,1130 900,1230 870,1270|1150,1120 1180,1130 1160,1180|690,95 740,110 735,130",
    rivers: "110,1400 125,1430 150,1460|850,480 900,560 925,640",
  },
  {
    o: [1380, 600],
    s: [0.4592, 0.3571],
    ringRoads:
      "0,180 100,170 180,182 215,175 222,120 215,20 200,0|278,0 278,190 235,255 120,265 0,265|385,0 383,150 365,340 300,405 235,423 0,428|600,0 612,100 612,300 480,480 435,510 350,560 310,635 270,685 190,685 165,700|155,740 130,820 105,845 0,882|390,37 600,37 650,30 705,40 840,28 870,42 895,45",
    highways:
      "385,175 460,178 610,190 830,210 930,285 1000,345 1110,380 1260,415 1431,520|1230,0 1210,150 1160,310 1110,400 930,620 890,700 855,840 825,875 790,892 735,905 645,965 570,965 430,1025 370,1068 270,1098 200,1115 0,1127|260,240 345,360 440,500 500,570 560,690 640,820 690,935 820,1085 900,1230 1020,1355 1090,1467|610,350 740,440 910,640 1000,800 1130,950 1250,1100 1300,1180 1400,1340|1170,1467 1235,1350 1431,1160|130,430 130,480 155,520 160,700 160,800 188,1020 220,1120 250,1240 258,1467|45,270 55,590 105,592 125,700|170,755 225,830 245,950 265,1030 280,1050 288,1100 340,1200 400,1310 465,1430 515,1418 640,1467|1355,260 1431,340|0,890 8,960 0,1000",
    streets:
      "955,0 975,30 1020,45 1060,90 1110,165 1180,200 1220,210 1355,262|1315,0 1305,80 1340,140 1350,240|1175,200 1195,310 1190,710 1145,830 1145,895 1195,1030 1195,1467|1145,870 1190,842 1290,827 1335,830 1431,790|1145,890 1000,935 865,1005 780,1000 695,1017|1030,1138 1060,1138|1285,1110 1330,1105 1431,1140|850,310 740,480 675,600|690,612 935,605|590,465 625,540 690,612|910,245 945,180|645,920 685,980 690,1070 730,1230 727,1467|660,945 690,985 705,1015|520,825 570,858 615,825|610,840 635,880 640,920|495,935 500,1000|120,840 200,847 395,847|55,880 55,940 67,1080 75,1110|0,55 65,38 380,37|45,100 45,270|128,340 128,430|280,177 385,177|590,570 620,540|0,1405 55,1455",
    lanes:
      "50,210 220,210|40,75 120,75|0,95 40,98|125,97 370,92|120,40 128,350|0,340 220,340|100,270 105,410|195,260 195,410|215,190 225,400|340,50 335,250|230,148 340,148|530,50 535,200|490,30 490,180|390,105 460,170|395,245 480,238 605,345|540,200 555,250 535,285|490,250 440,350 430,390|530,100 690,102|835,45 850,200|640,100 660,180 700,65|705,215 705,260 845,250|780,300 785,380 800,385|615,345 780,320|895,270 890,490 875,530 880,600|945,310 945,460 955,660 1000,675|1022,380 1020,620 980,665|760,448 895,440 1000,440|1000,670 1110,657 1140,672 1190,668|1000,680 1003,950 1030,1200 1028,1410|1275,300 1275,460 1295,600 1287,1467|1300,640 1360,632 1431,597|820,888 865,888 890,898 1018,898 1020,930|1030,1235 1075,1235 1087,1270 1087,1367 1390,1367|1165,325 1250,312 1431,283|1250,290 1275,340|900,115 890,190 900,210 1040,225 1150,230|900,115 965,108 940,160|1050,60 1030,230 1025,340|720,1165 765,1157 768,1340|820,1380 858,1467|500,1380 640,1330 700,1350|450,1467 465,1430|170,1467 300,1390 370,1380 430,1390|0,1415 150,1413 330,1308 400,1295|83,1200 83,1310 98,1350 98,1467|0,1400 60,1450|0,985 75,985 115,1003 240,995 290,970 430,975|235,760 225,830|350,740 355,925 410,925 445,938|350,610 415,755 480,775|345,760 415,800 480,830|410,925 440,770|345,760 395,720 550,620|345,610 530,490|255,470 350,465|228,440 260,490 345,610|290,300 310,350 330,430 400,560 480,740 570,880 600,900 600,1070|595,1015 690,1015|638,925 640,1068|595,1072 690,1068|430,1010 500,740 580,680 690,640|445,765 500,800 530,830|530,490 600,620 690,780 740,940 740,975|510,510 640,780|575,500 665,720|540,600 620,540|655,800 695,797 700,830|270,230 300,270 395,400 470,415|430,400 550,415|540,420 590,465 480,500|605,510 640,508 735,575 735,605|115,600 280,580 380,560|255,470 258,620 240,625 240,690|400,850 560,920 640,925|560,820 510,870 510,930|520,980 560,900 600,850|960,20 1100,50 1165,45|1005,150 1080,148 1230,30|960,20 965,100 1005,150|1225,80 1255,125 1300,85|1370,60 1431,100|1380,0 1370,70|1425,0 1425,95|900,1467 1010,1430 1023,1467|1130,80 1140,160 1185,165|1100,0 1110,70|640,830 700,825|660,850 730,940|690,640 680,590|75,30 75,70|165,40 165,90 195,140|230,190 262,235|620,700 700,620|490,660 580,830",
    dashes: "540,410 630,420 730,460|470,250 415,370|640,12 1090,12|1175,480 1175,520|160,60 165,130|300,260 330,300|25,450 5,520|70,515 95,515|18,530 12,590|1255,300 1255,360|340,180 340,250",
    parks:
      "45,100 75,75 95,95 95,155 60,160|330,475 370,475 370,545 330,548|495,130 515,100 540,120 520,175 495,165|635,105 690,100 665,180|260,770 340,760 345,800 320,828 275,825|350,560 430,520 410,590 350,610",
    lakes: "270,770 330,780 320,815 260,800|505,115 525,120 515,150",
    rivers: "1180,0 1215,45 1290,55 1340,95 1360,110 1355,200 1395,240 1405,280 1420,300",
  },
];

type LayerKey = "ringRoads" | "highways" | "streets" | "lanes" | "dashes" | "parks" | "lakes" | "rivers";

function layer(key: LayerKey, close = false) {
  return TILES.map((t) =>
    t[key]
      .split("|")
      .map((line) => {
        const pts = line.trim().split(" ").map((p) => {
          const [x, y] = p.split(",").map(Number);
          return `${(t.o[0] + x * t.s[0]).toFixed(1)} ${(t.o[1] + y * t.s[1]).toFixed(1)}`;
        });
        return `M${pts.join("L")}${close ? "Z" : ""}`;
      })
      .join(""),
  ).join("");
}

const TOWNS: [string, number, number][] = [
  ["聂各庄乡", 909.7, 131.7], ["上庄镇", 1079.8, 154], ["苏家坨", 979, 190], ["温泉镇", 1019, 259.8],
  ["军庄镇", 885, 363.4], ["妙峰山镇", 793, 425.8], ["广宁街道", 956.6, 531.9], ["永定镇", 896.8, 589.4],
  ["北七家镇", 1443.4, 105], ["燕丹乡", 1464, 168], ["东小口镇", 1416, 237], ["黄港乡", 1511, 241.5],
  ["孙河乡", 1613.5, 277.7], ["和平乡", 1619.7, 311.4], ["大屯街道", 1421, 374], ["望京街道", 1555, 386],
  ["楼梓庄乡", 1733.5, 419.6], ["李桥镇", 1873, 273.6], ["李遂镇", 2021.5, 171], ["宋庄镇", 1971.5, 505.7],
  ["管庄乡", 1740, 574], ["潭柘寺镇", 756, 645.7], ["长辛店镇", 1069, 729.6], ["长辛店街道", 1071, 764],
  ["王佐镇", 977.6, 817.5], ["青龙湖镇", 845, 867.8], ["十里镇", 764, 875], ["长阳镇", 1083, 901.8],
  ["芦城村", 1212.4, 921.4], ["金星乡", 1366, 901.8], ["良乡农场", 919, 1013.5], ["星城街道", 815.5, 1029.6],
  ["北臧村镇", 1231, 1077.8], ["磁各庄", 1415.4, 1017.8], ["北京南苑机场", 1472.8, 857.8],
  ["黑庄户乡", 1740, 703.6], ["张家湾镇", 1959.5, 693.6], ["台湖镇", 1838.7, 749.3], ["旧宫镇", 1465.9, 795.3],
  ["瀛海镇", 1493.4, 921.8], ["于家务回族乡", 1927.8, 1005.3], ["青云店镇", 1577.5, 1079.2],
  ["长子营镇", 1741.4, 1081], ["北务镇", 2050, 1090],
];

const DISTRICTS: [string, number, number][] = [
  ["海淀区", 1225, 462.5], ["门头沟区", 881, 507], ["石景山区", 1095, 587], ["朝阳区", 1475, 553],
  ["通州区", 1847, 575], ["丰台区", 1203, 690], ["房山区", 953, 940.7], ["大兴区", 1300.8, 988.5],
];

function CityMap() {
  const rings = layer("ringRoads");
  const highways = layer("highways");
  const streets = layer("streets");
  return (
    <svg className="block h-[1020px] w-[1282px] bg-[#142f4a]" viewBox="755 104 1282 1020">
      <path d={layer("parks", true)} fill="#0d2033" />
      <path d={layer("rivers")} fill="none" stroke="#091a29" strokeWidth="4" />
      <path d={layer("lakes", true)} fill="#05121d" />
      <g fill="none" strokeLinejoin="round">
        <path d={layer("dashes")} stroke="#000" strokeWidth="1.900" strokeDasharray="20 12" />
        <path d={layer("lanes")} stroke="#000" strokeWidth="2.100" />
        <path d={streets} stroke="#12384a" strokeWidth="6.800" />
        <path d={streets} stroke="#000" strokeWidth="4.400" />
        <path d={highways} stroke="#3b7f95" strokeWidth="8.200" />
        <path d={rings} stroke="#3b7f95" strokeWidth="9.800" />
        <path d={highways} stroke="#000" strokeWidth="4.800" />
        <path d={rings} stroke="#000" strokeWidth="6.600" />
      </g>
      <rect x="989" y="855" width="31.500" height="8" rx="2" fill="#d3605a" />
      <rect x="989" y="861" width="31.500" height="16" rx="2" fill="#6c9e3f" />
      <rect x="1062" y="959" width="57.500" height="28" rx="4" fill="#e07b55" />
      <rect x="1065" y="961.500" width="51.500" height="23" rx="3" fill="none" stroke="#eda58a" strokeWidth="1" />
      <g fontSize="22" fill="#fff" textAnchor="middle" className="font-['DejaVu_Sans',sans-serif]">
        <text x="1004.500" y="875.500" textLength="29" lengthAdjust="spacingAndGlyphs">G4</text>
        <text x="1090.500" y="980" textLength="55" lengthAdjust="spacingAndGlyphs">G107</text>
      </g>
      <g textAnchor="middle" className={CJK}>
        <g fontSize="22" fill="#8f8b87" stroke="#05090d" strokeWidth="4" paintOrder="stroke" strokeLinejoin="round">
          {TOWNS.map(([t, x, y]) => (
            <text key={t} x={x} y={y + 7.300}>{t}</text>
          ))}
        </g>
        {DISTRICTS.map(([t, x, y]) => (
          <g key={t}>
            <rect x={x - t.length * 12 - 2} y={y - 14} width={t.length * 24 + 4} height="27" fill="#000" />
            <text x={x} y={y + 7.500} fontSize="23.500" fill="#96928e">{t}</text>
          </g>
        ))}
        <text x="1413" y="595" fontSize="29.500" fill="#96928e" stroke="#05090d" strokeWidth="3.500" paintOrder="stroke">北京市</text>
      </g>
      <circle cx="1391" cy="858.500" r="11" fill="#fff" stroke="#294f86" strokeWidth="1.500" />
      <path d="M1391 850.500c1.200 0 1.500 1.500 1.500 3v2l6 4v1.800l-6-2v3.600l2.300 1.700v1.400l-3.800-1-3.800 1v-1.400l2.300-1.700v-3.600l-6 2v-1.800l6-4v-2c0-1.500.3-3 1.500-3z" fill="#1d4280" />
    </svg>
  );
}

function MapPanel() {
  return (
    <section className="relative mx-[2px] h-[1036px] w-[1336px]">
      <div className="absolute bottom-[2px] left-[4px] right-[2px] top-0 border-x-2 border-b-2 border-[#2547a4] bg-[rgba(26,33,80,0.57)]" />
      <i className="absolute bottom-0 left-0 h-8 w-[33px] border-b-[6px] border-l-[5px] border-[#4b7ee9]" />
      <i className="absolute bottom-0 right-0 h-8 w-[33px] border-b-[6px] border-r-[5px] border-[#4b7ee9]" />
      <div className="relative ml-[27px] w-[1282px]">
        <CityMap />
      </div>
    </section>
  );
}

/* ------------------------------------------------------------------ */
/* Ranking tables                                                      */
/* ------------------------------------------------------------------ */

type TableProps = {
  title: string;
  cols: string;
  head: string[];
  rows: string[][];
  rowHeight: string;
  lastHeight: string;
};

function TablePanel({ title, cols, head, rows, rowHeight, lastHeight }: TableProps) {
  return (
    <Panel className="h-[560px]">
      <Title icon="bars" text={title} />
      <div className="relative mx-[4px] pt-[80px] text-center">
        <div className={`grid items-center py-[10px] text-[28px] font-bold leading-[34px] text-[#79cbee] ${cols}`}>
          {head.map((h) => (
            <div key={h} className="whitespace-pre-line">{h}</div>
          ))}
        </div>
        {rows.map((r, i) => (
          <div key={i} className={`grid items-center pt-[2px] text-[26px] leading-[30px] text-white ${cols} ${i === rows.length - 1 ? lastHeight : rowHeight} ${i % 2 === 0 ? "bg-[#10284c]" : ""}`}>
            {r.map((c, j) => (
              <div key={j} className="whitespace-pre-line">{c}</div>
            ))}
          </div>
        ))}
      </div>
    </Panel>
  );
}

const TABLES: TableProps[] = [
  {
    title: "Intersection Congestion Status",
    cols: "grid-cols-[182px_162px_290px]",
    head: ["Congestion\nRank", "Intersection", "Est. Congestion Time\n(min)"],
    rows: [["1", "Yonghe Road", "11"], ["2", "Nanhu Road", "12"], ["3", "Wangxi Road", "13"], ["4", "Fifth Avenue", "14"], ["5", "Sunshine\nAvenue", "15"]],
    rowHeight: "h-[70.8px]",
    lastHeight: "h-[101px]",
  },
  {
    title: "Intersection Traffic Flow Statistics",
    cols: "grid-cols-[75px_209px_350px]",
    head: ["Rank", "Intersection", "Total Traffic Flow (Units)"],
    rows: [["1", "Yonghe Road", "24089"], ["2", "Nanhu Road", "24985"], ["3", "Wangxi Road", "25431"], ["4", "Fifth Avenue", "26784"], ["5", "Sunshine Avenue", "27798"]],
    rowHeight: "h-[83.6px]",
    lastHeight: "h-[84px]",
  },
  {
    title: "Adaptive Traffic Lights",
    cols: "grid-cols-[173px_220px_239px]",
    head: ["Intersection", "Red Light Time\n(s)", "Green Light Time\n(s)"],
    rows: [["Yonghe Road", "6", "40"], ["Nanhu Road", "7", "48"], ["Wangxi Road", "8", "34"], ["Fifth Avenue", "9", "35"], ["Sunshine\nAvenue", "10", "38"]],
    rowHeight: "h-[70.8px]",
    lastHeight: "h-[101px]",
  },
  {
    title: "Congestion Resolution Ranking",
    cols: "grid-cols-[95px_271px_266px]",
    head: ["Rank", "Intersection", "Duration (min)"],
    rows: [["1", "Nanhu Road", "4"], ["2", "Wangxi Road", "6"], ["3", "Fifth Avenue", "8"], ["4", "Yonghe Road", "9"], ["5", "Sunshine Avenue", "10"]],
    rowHeight: "h-[83.6px]",
    lastHeight: "h-[84px]",
  },
];

/* ------------------------------------------------------------------ */
/* Page                                                                */
/* ------------------------------------------------------------------ */

export default function App() {
  return (
    <div className="flex h-[1800px] w-[2880px] flex-col overflow-hidden bg-[#0c132b] font-['Liberation_Serif',serif]">
      <Toolbar />
      <main className="relative flex-1">
        <div className="absolute left-0 top-0 h-[919px] w-[2848px] border-b-2 border-r-2 border-[#f0f0f2] bg-[#0c132b] bg-[repeating-linear-gradient(90deg,transparent_0_30px,rgba(110,140,190,0.028)_30px_32px),repeating-linear-gradient(0deg,transparent_0_25px,rgba(110,140,190,0.028)_25px_27px)]" />
        <div className="absolute bottom-0 right-[10px] top-[498px] w-[12px] rounded-t-[6px] bg-[#070c1a]" />
        <div className="relative flex gap-[56px] pl-[28px]">
          <div className="flex w-[642px] flex-col gap-[50px]">
            <Panel className="-mt-[24px] h-[450px] [clip-path:inset(24px_0_0_0)]">
              <div className="pt-[24px]">
                <Donut />
              </div>
            </Panel>
            <Panel className="h-[560px]">
              <Title icon="monitor" text="Vehicle Status Statistics" />
              <Radar />
            </Panel>
          </div>
          <MapPanel />
          <div className="flex w-[642px] flex-col gap-[50px]">
            <Panel className="-mt-[24px] h-[450px] [clip-path:inset(24px_0_0_0)]">
              <div className="pt-[24px]">
                <Gauge />
              </div>
            </Panel>
            <WeekChart />
          </div>
        </div>
        <div className="relative mt-[30px] flex gap-[56px] pl-[28px]">
          {TABLES.map((t) => (
            <TablePanel key={t.title} {...t} />
          ))}
        </div>
      </main>
    </div>
  );
}
